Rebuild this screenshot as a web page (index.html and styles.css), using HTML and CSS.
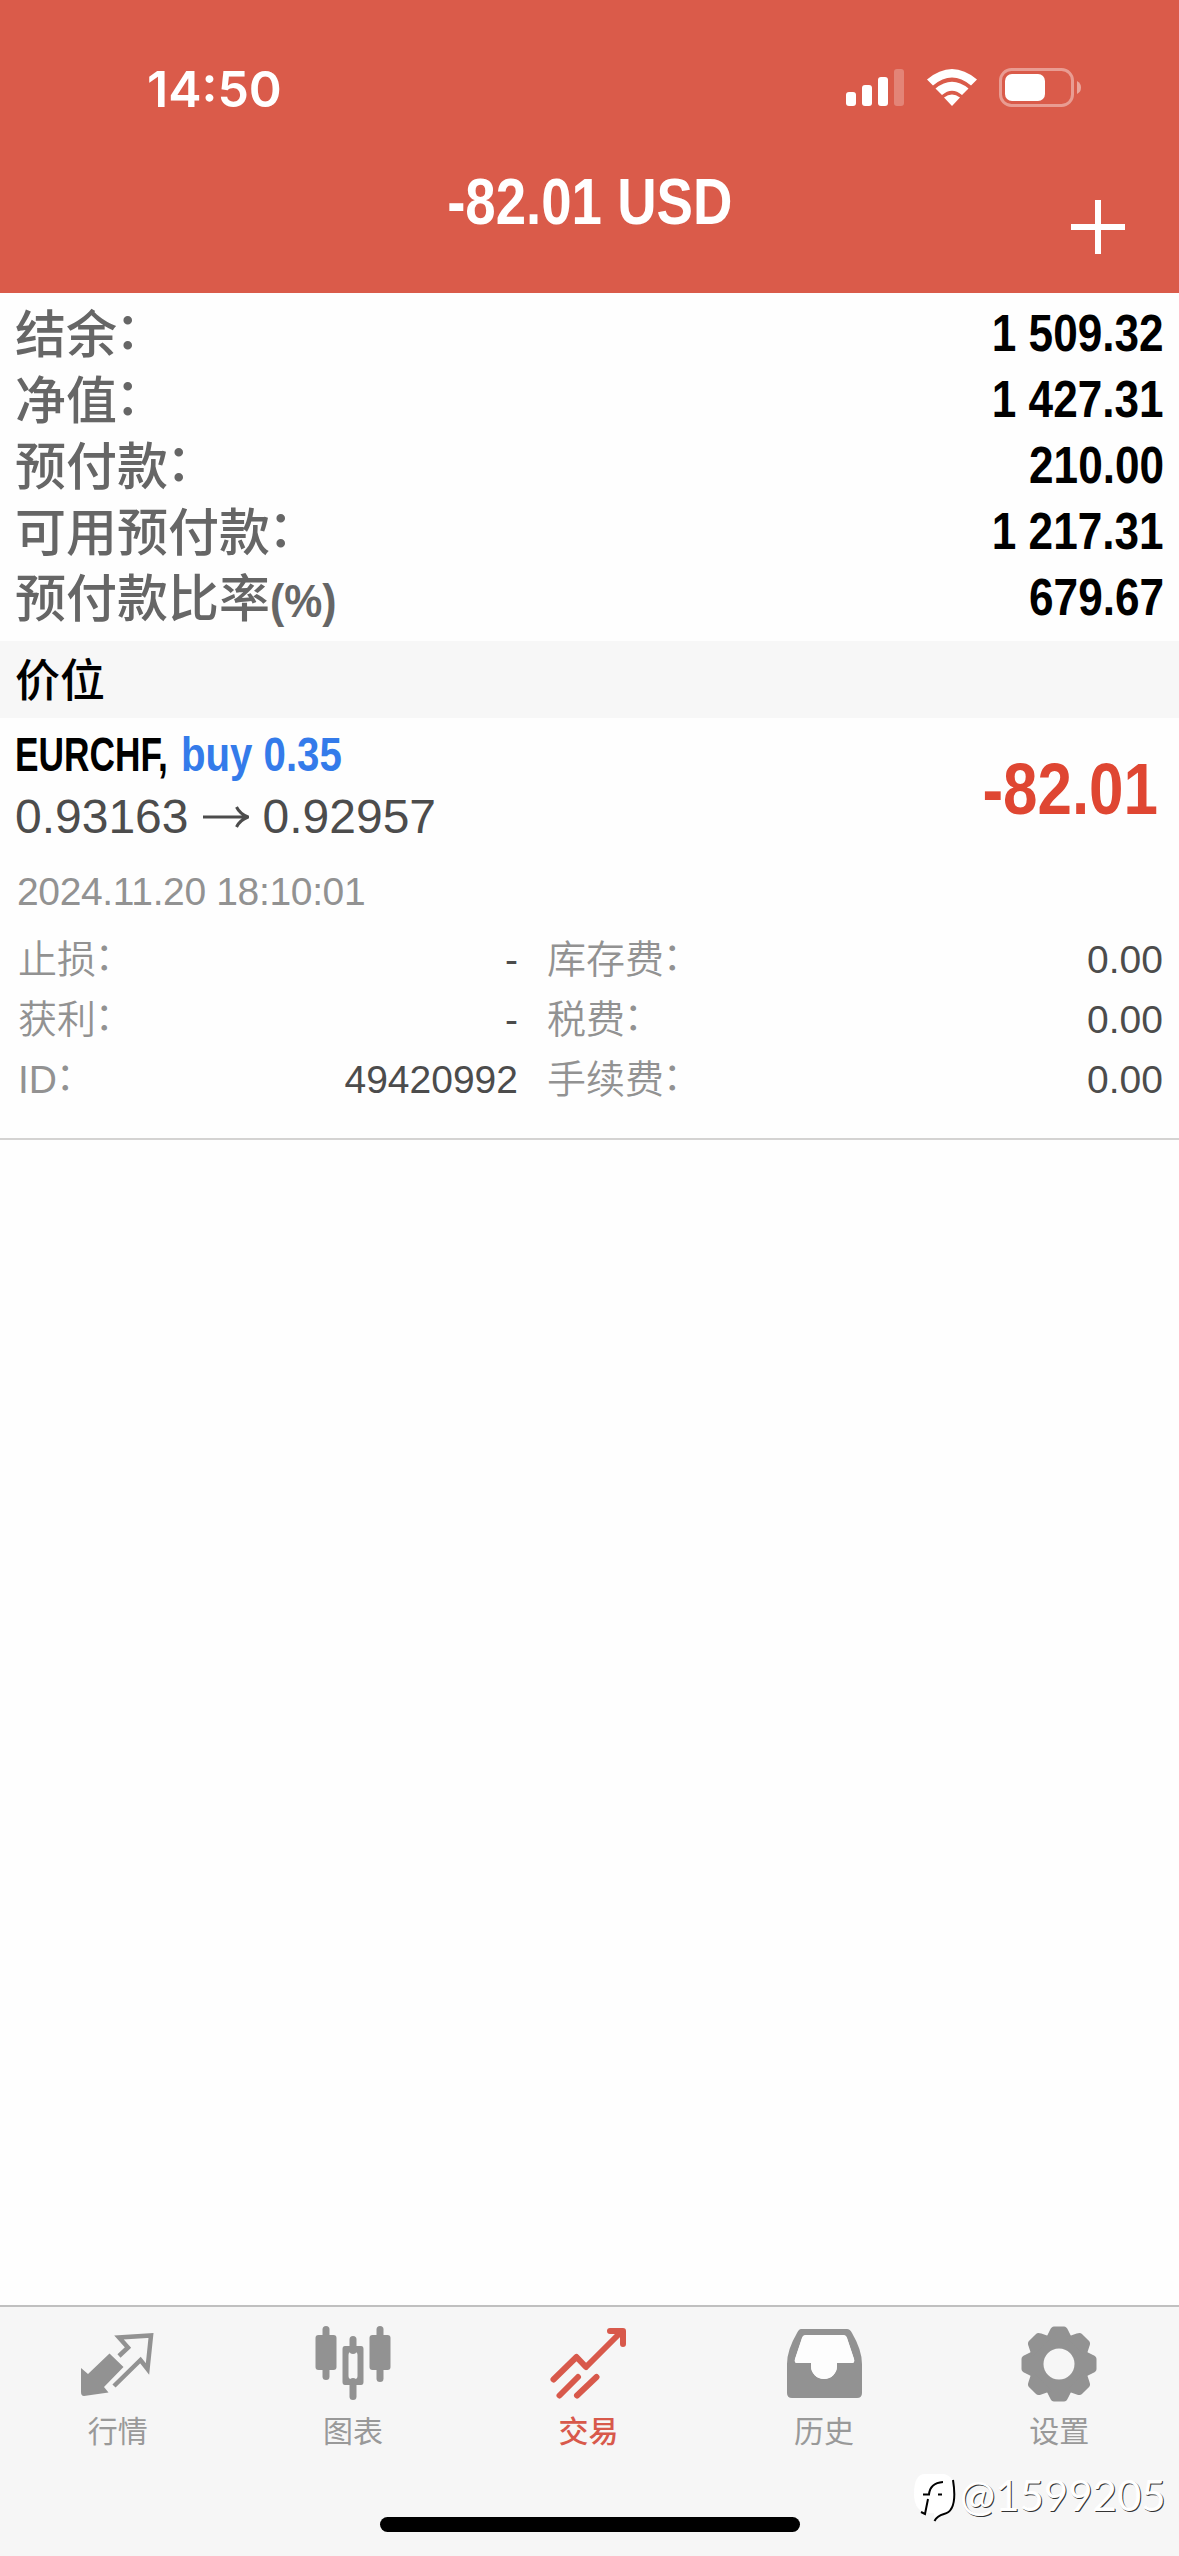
FILE: index.html
```html
<!DOCTYPE html>
<html lang="zh-CN">
<head>
<meta charset="utf-8">
<title>交易</title>
<link rel="stylesheet" href="styles.css">
</head>
<body>
<div class="app">
  <header class="header">
    <div class="status">
      <span class="clock">14:50</span>
      <svg class="status-icons" width="240" height="42" viewBox="844 66 240 42">
        <g fill="#fff">
          <rect x="846" y="92" width="10" height="14" rx="3"/>
          <rect x="862" y="85" width="10" height="21" rx="3"/>
          <rect x="878" y="77" width="10" height="29" rx="3"/>
          <rect x="894" y="69" width="10" height="37" rx="3" opacity=".25"/>
          <path d="M927 79.500Q952 58.500 977 79.500L971 85.500Q952 69.500 933 85.500Z"/>
          <path d="M935.500 88.500Q952 75 968.500 88.500L962 95Q952 86.500 942 95Z"/>
          <path d="M944 97.500Q952 91.500 960 97.500L952 106Z"/>
          <rect x="1005" y="74" width="40" height="27" rx="7"/>
          <path d="M1077 81Q1081 83 1081 87.500Q1081 92 1077 94Z" opacity=".45"/>
        </g>
        <rect x="1000.500" y="69.500" width="72" height="36" rx="11" fill="none" stroke="#fff" stroke-width="3" opacity=".4"/>
      </svg>
    </div>
    <div class="titlebar">
      <h1 class="title">-82.01 USD</h1>
      <svg class="add" width="54" height="54" viewBox="0 0 54 54"><path d="M27 0V54M0 27H54" stroke="#fff" stroke-width="6"/></svg>
    </div>
  </header>

  <main class="main">
    <section class="summary">
      <div class="sum-row"><span>结余<i class="colon">：</i></span><b>1 509.32</b></div>
      <div class="sum-row"><span>净值<i class="colon">：</i></span><b>1 427.31</b></div>
      <div class="sum-row"><span>预付款<i class="colon">：</i></span><b>210.00</b></div>
      <div class="sum-row"><span>可用预付款<i class="colon">：</i></span><b>1 217.31</b></div>
      <div class="sum-row"><span>预付款比率<i class="percent">(%)</i></span><b>679.67</b></div>
    </section>
    <h2 class="section-title">价位</h2>
    <section class="position">
      <div class="position-top">
        <div class="position-info">
          <div class="symbol-row"><span class="symbol">EURCHF,</span><span class="side">buy 0.35</span></div>
          <div class="price-row">
            <span>0.93163</span>
            <svg width="46" height="24" viewBox="0 0 46 24"><path d="M0 12H44M33.500 2Q37 9 45 12Q37 15 33.500 22" fill="none" stroke="#4c4c4c" stroke-width="3"/></svg>
            <span>0.92957</span>
          </div>
        </div>
        <div class="profit">-82.01</div>
      </div>
      <div class="date">2024.11.20 18:10:01</div>
      <div class="details">
        <div class="cell"><span>止损<i class="colon">：</i></span><em>-</em></div>
        <div class="cell"><span>库存费<i class="colon">：</i></span><em>0.00</em></div>
        <div class="cell"><span>获利<i class="colon">：</i></span><em>-</em></div>
        <div class="cell"><span>税费<i class="colon">：</i></span><em>0.00</em></div>
        <div class="cell"><span>ID<i class="colon">：</i></span><em>49420992</em></div>
        <div class="cell"><span>手续费<i class="colon">：</i></span><em>0.00</em></div>
      </div>
    </section>
  </main>

  <nav class="tabs">
    <div class="tab">
      <svg width="76" height="76" viewBox="0 0 76 76">
        <path d="M1 42L8 48L29.500 27.500L43.500 41L24 61L28.500 66.500L4 70Q1 70 1 66Z" fill="#929292"/>
        <path d="M39 30L48 21.500L39 11.500L71 9.500L67.500 43L60.500 34L34 60" fill="none" stroke="#929292" stroke-width="4.500"/>
      </svg>
      <span>行情</span>
    </div>
    <div class="tab">
      <svg width="76" height="76" viewBox="0 0 76 76" fill="#929292">
        <rect x="7.500" y="0" width="7" height="54" rx="3.500"/><rect x="0.500" y="9" width="21" height="35" rx="3"/>
        <rect x="61.500" y="0" width="7" height="56" rx="3.500"/><rect x="54.500" y="9" width="21" height="35" rx="3"/>
        <rect x="34.500" y="10" width="7" height="18" rx="3.500"/><rect x="34.500" y="52" width="7" height="22" rx="3.500"/>
        <path fill-rule="evenodd" d="M30 20H46Q48.500 20 48.500 23V56Q48.500 59 46 59H30Q27.500 59 27.500 56V23Q27.500 20 30 20ZM36 26Q33.500 26 33.500 29V50Q33.500 53 36 53H40Q42.500 53 42.500 50V29Q42.500 26 40 26Z"/>
      </svg>
      <span>图表</span>
    </div>
    <div class="tab active">
      <svg width="76" height="76" viewBox="0 0 76 76" fill="none" stroke="#d8594b" stroke-width="6" stroke-linecap="round" stroke-linejoin="round">
        <path d="M3.500 53.500L26.500 31L36 41L71 6M60 5H73V18M9.500 69.500L28 51M27 69.500L46.500 51"/>
      </svg>
      <span>交易</span>
    </div>
    <div class="tab">
      <svg width="76" height="76" viewBox="0 0 76 76" fill="#929292">
        <path fill-rule="evenodd" d="M15 3H61Q64 3 66 7Q76 24 76 38V67Q76 72 71 72H6Q1 72 1 67V38Q1 24 11 7Q13 3 15 3ZM20 9Q17 9 16 12L9 33Q8 37 11 37H25V40A13 13 0 0 0 51 40V37H66Q69 37 68 33L61 12Q60 9 57 9Z"/>
        <path d="M20 9H57Q60 9 61 12L68 33Q69 37 66 37H51V40A13 13 0 0 1 25 40V37H11Q8 37 9 33L16 12Q17 9 20 9Z" fill="#fdfdfd"/>
      </svg>
      <span>历史</span>
    </div>
    <div class="tab">
      <svg width="76" height="76" viewBox="-38 -38 76 76">
        <defs><path id="tooth" d="M-14 -24L-9 -34Q-7.500 -37.500 -5 -37.500H5Q7.500 -37.500 9 -34L14 -24Z"/></defs>
        <g fill="#929292">
          <circle r="29"/>
          <use href="#tooth"/><use href="#tooth" transform="rotate(45)"/><use href="#tooth" transform="rotate(90)"/><use href="#tooth" transform="rotate(135)"/>
          <use href="#tooth" transform="rotate(180)"/><use href="#tooth" transform="rotate(225)"/><use href="#tooth" transform="rotate(270)"/><use href="#tooth" transform="rotate(315)"/>
        </g>
        <circle r="15.500" fill="#f6f6f6"/>
      </svg>
      <span>设置</span>
    </div>
  </nav>
  <div class="home-indicator"></div>
  <div class="watermark">
    <svg width="44" height="50" viewBox="0 0 44 50">
      <path d="M12 1H31Q41 3 42 18Q42 38 33 41Q25 43 22 49L21 40Q1 42 1 21Q1 1 12 1Z" fill="#fff"/>
      <path d="M40 7Q45 38 31 41Q24 43 21.500 48M10 21.500H16Q17 10 30 9M15 26L12 41L8 39M25 21.500H29" fill="none" stroke="#000" stroke-width="2"/>
    </svg>
    <span>@1599205</span>
  </div>
</div>
</body>
</html>
```
FILE: styles.css
```css
* { box-sizing: border-box; }
body {
  margin: 0;
  background: #fefefe;
  font-family: "Liberation Sans", "Noto Sans CJK SC", sans-serif;
}
i, em { font-style: normal; }
svg { display: block; flex: none; }

.app {
  position: relative;
  width: 1179px;
  height: 2556px;
  display: flex;
  flex-direction: column;
  overflow: hidden;
}

.header {
  height: 293px;
  background: #da5b4a;
  color: #fff;
}
.status {
  display: flex;
  justify-content: space-between;
  align-items: flex-start;
  padding: 66px 95px 0 147px;
}
.clock {
  font: 600 50px/44px Inter, sans-serif;
  padding-top: 1px;
}
.titlebar {
  display: grid;
  grid-template-columns: 1fr auto 1fr;
  padding: 55px 54px 0;
}
.title {
  grid-column: 2;
  margin: 0;
  font-size: 65px;
  line-height: 72px;
  transform: scaleX(0.84);
}
.add {
  justify-self: end;
  margin-top: 34px;
}

.main { flex: 1; }
.summary { padding: 8px 15px 10px 15px; }
.sum-row {
  display: flex;
  justify-content: space-between;
  height: 66px;
  font-size: 51px;
  line-height: 66px;
  color: #666;
  font-weight: 500;
  white-space: nowrap;
}
.sum-row span { padding-top: 2px; }
.sum-row b {
  color: #000;
  font-weight: 700;
  transform: scaleX(0.865);
  transform-origin: right;
}
.colon {
  position: relative;
  top: -0.08em;
  left: -0.04em;
}
.percent {
  display: inline-block;
  font-weight: 700;
  font-size: 47px;
  transform: scaleX(0.91);
  transform-origin: left;
}

.section-title {
  margin: 0;
  height: 77px;
  padding: 3px 0 0 15px;
  background: #f7f7f7;
  color: #000;
  font-size: 45px;
  line-height: 75px;
  font-weight: 500;
}

.position {
  height: 422px;
  padding: 6px 16px 0 15px;
  border-bottom: 2px solid #d4d3d2;
}
.position-top {
  display: flex;
  justify-content: space-between;
  height: 138px;
}
.symbol-row {
  display: flex;
  height: 63px;
  font-size: 49px;
  line-height: 60px;
  font-weight: 700;
  color: #000;
}
.symbol {
  width: 166px;
  white-space: nowrap;
  transform: scaleX(0.72);
  transform-origin: left;
}
.side {
  color: #347bea;
  white-space: nowrap;
  transform: scaleX(0.82);
  transform-origin: left;
}
.price-row {
  display: flex;
  align-items: center;
  gap: 14px;
  font-size: 48px;
  line-height: 60px;
  color: #4c4c4c;
}
.profit {
  font-size: 72px;
  font-weight: 700;
  line-height: 80px;
  padding: 25px 6px 0 0;
  color: #df4632;
  transform: scaleX(0.86);
  transform-origin: right;
}
.date {
  padding-left: 2px;
  height: 68px;
  font-size: 39px;
  letter-spacing: -0.35px;
  line-height: 60px;
  color: #929292;
}
.details {
  display: grid;
  grid-template-columns: 500px 1fr;
  column-gap: 29px;
  grid-auto-rows: 60px;
  padding-left: 3px;
  font-size: 39px;
  line-height: 60px;
  color: #929292;
}
.cell {
  display: flex;
  justify-content: space-between;
  font-weight: 350;
}
.cell em { color: #4c4c4c; font-weight: 400; }

.tabs {
  display: grid;
  grid-template-columns: repeat(5, 1fr);
  height: 251px;
  padding: 19px 2px 0 0;
  border-top: 2px solid #c0c0c0;
  background: #f6f6f6;
}
.tab {
  display: flex;
  flex-direction: column;
  align-items: center;
  font-size: 30px;
  line-height: 40px;
  gap: 10px;
  color: #999;
}
.tab.active { color: #d8594b; font-weight: 500; }

.home-indicator {
  position: absolute;
  left: 380px;
  top: 2517px;
  width: 420px;
  height: 15px;
  border-radius: 8px;
  background: #000;
}
.watermark {
  position: absolute;
  left: 913px;
  top: 2470px;
  display: flex;
  align-items: center;
  gap: 3px;
  color: #fff;
  font: 400 42px/50px Lato, sans-serif;
  text-shadow: 1px 1px 0 #333;
}
.watermark span { padding-bottom: 5px; }
```
